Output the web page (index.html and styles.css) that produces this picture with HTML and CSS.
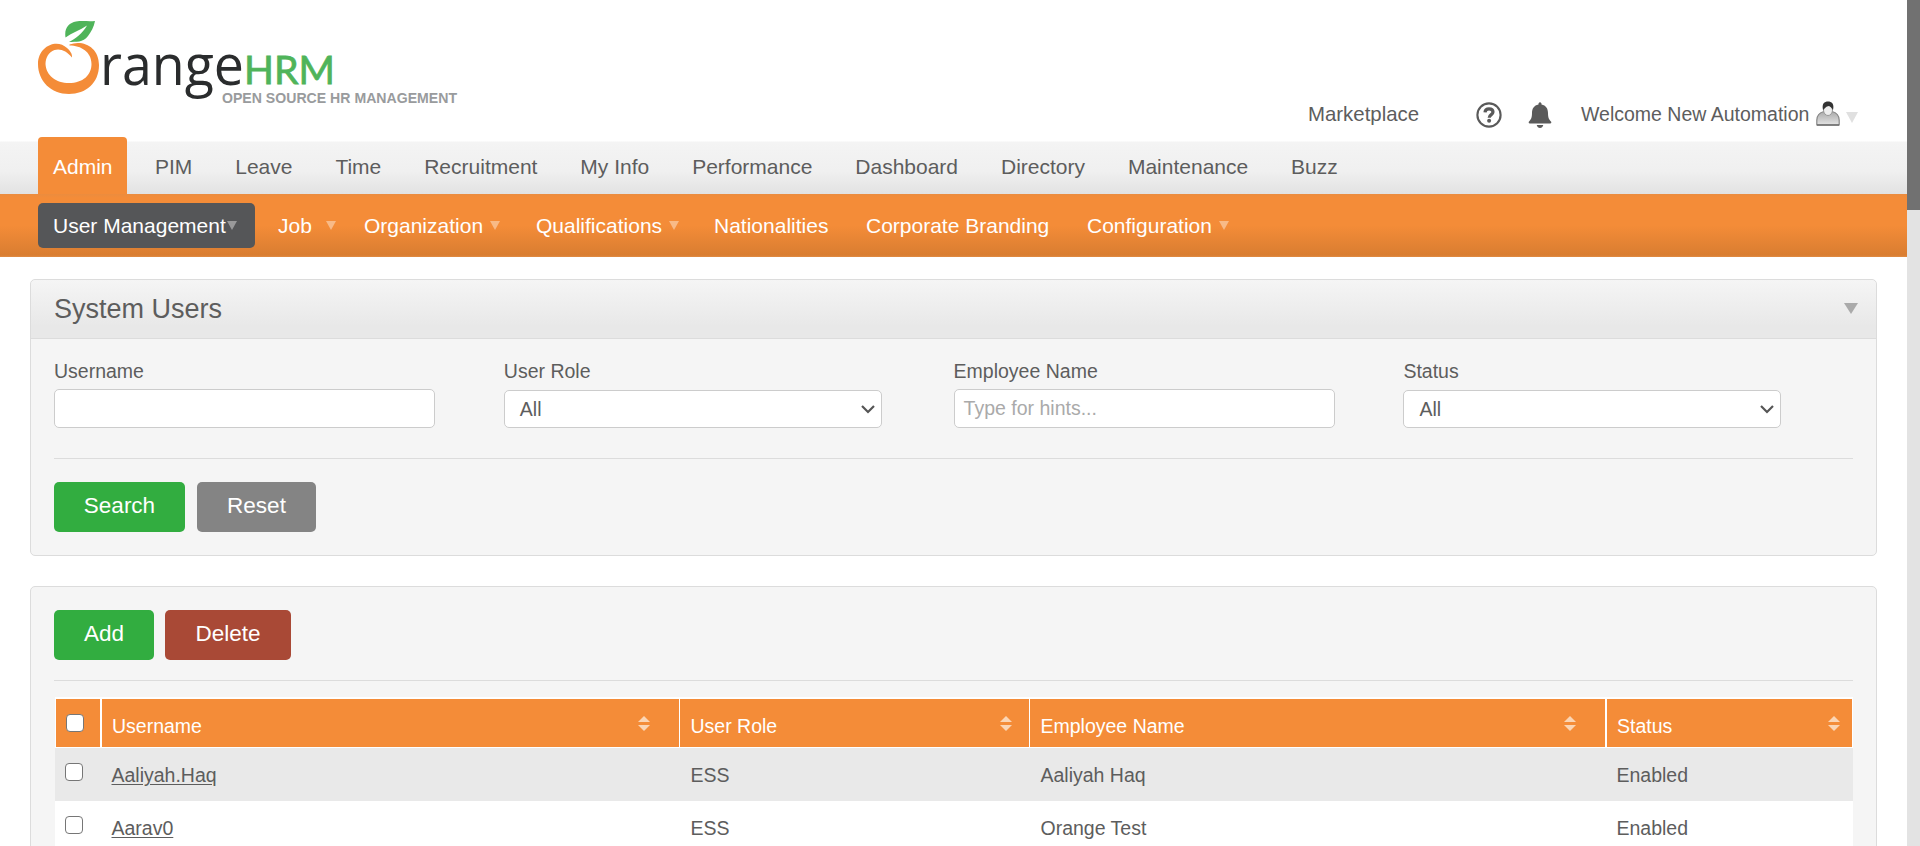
FILE: index.html
```html
<!DOCTYPE html>
<html lang="en">
<head>
<meta charset="utf-8">
<title>OrangeHRM</title>
<link rel="stylesheet" href="styles.css">
</head>
<body>
<div class="page">
  <header class="branding">
    <svg class="logo" width="440" height="100" viewBox="0 0 440 100">
      <path fill="#4fb45a" d="M27.500 16.500C26 7 31 2 38 .6C44 -.5 50 .6 57 0C56 6 53 11 50 15C45 22 38 20.500 31 21C37 18 45 12 49 4.500C42 9 34 12 27.500 16.500Z"/>
      <path fill="#f48c38" d="M31.500 23.500C45 18.500 61 26 61 44C61 62 48 73 31 73C13 73 0 60 0 43C0 25 19 17 29 27C32 29.500 34.500 33 34 36.500C29 30 22 27 16.500 29C10.500 31 7.500 37 7.500 43C8 54.500 18 62 31 62C45 62 53.500 54 53.500 43C53.500 31 43 24.500 31.500 24.500Z"/>
      <text class="logo-name" x="62" y="64" textLength="144" lengthAdjust="spacingAndGlyphs">range</text>
      <text class="logo-hrm" x="206" y="63" textLength="91" lengthAdjust="spacingAndGlyphs">HRM</text>
      <text class="logo-tag" x="184" y="82" textLength="235" lengthAdjust="spacingAndGlyphs">OPEN SOURCE HR MANAGEMENT</text>
    </svg>
    <nav class="account">
      <a class="market">Marketplace</a>
      <svg class="help" width="26" height="26" viewBox="0 0 26 26"><circle cx="13" cy="13" r="11.6" fill="none" stroke="#5a5a5a" stroke-width="2.1"/><path d="M9 10.3C9.2 7.9 10.8 6.8 13 6.8C15.4 6.8 17 8.1 17 10.1C17 12.7 13.2 12.6 13.2 15.8" fill="none" stroke="#5a5a5a" stroke-width="3.200"/><circle cx="13.1" cy="18.800" r="2" fill="#5a5a5a"/></svg>
      <svg class="bell" width="24" height="26" viewBox="0 0 24 26"><path fill="#5a5a5a" d="M10.5 2.4V1.5Q12 -.8 13.5 1.5V2.4C18 3.2 20 6.5 20 11C20 16.5 21.500 18 23 19.500Q24 21.500 22 21.600H2Q0 21.500 1 19.500C2.500 18 4 16.500 4 11C4 6.500 6 3.200 10.500 2.400ZM8.700 23H15.300Q14.500 26 12 26T8.700 23Z"/></svg>
      <a class="welcome">Welcome New Automation</a>
      <svg class="user" width="24" height="25" viewBox="0 0 24 25"><defs><linearGradient id="coat" x2="0" y2="1"><stop stop-color="#aaa"/><stop offset="1" stop-color="#e4e4e4"/></linearGradient></defs><path d="M.8 24V19C1 14 4 11.500 8 10.500H16C20 11.500 23 14 23.200 19V24Z" fill="url(#coat)" stroke="#888" stroke-width="1.200"/><path d="M1 24H23" stroke="#666" stroke-width="1.400"/><ellipse cx="12" cy="9" rx="4.500" ry="5.500" fill="#eee" stroke="#999"/><path d="M7 9C5.500 2.500 8.500 .5 12 .5S18.500 2.500 17 9C16 8 15.500 6 13 5C10 5 8.500 8 7 9Z" fill="#333"/></svg>
      <i class="arrow arrow-user"></i>
    </nav>
  </header>
  <nav class="menu">
    <a class="tab tab-active">Admin</a><a class="tab">PIM</a><a class="tab">Leave</a><a class="tab">Time</a><a class="tab">Recruitment</a><a class="tab">My Info</a><a class="tab">Performance</a><a class="tab">Dashboard</a><a class="tab">Directory</a><a class="tab">Maintenance</a><a class="tab">Buzz</a>
  </nav>
  <nav class="submenu">
    <a class="sub sub-active">User Management<i class="arrow"></i></a>
    <a class="sub sub-job">Job<i class="arrow"></i></a>
    <a class="sub sub-org">Organization<i class="arrow"></i></a>
    <a class="sub sub-qual">Qualifications<i class="arrow"></i></a>
    <a class="sub sub-nat">Nationalities</a>
    <a class="sub sub-brand">Corporate Branding</a>
    <a class="sub">Configuration<i class="arrow"></i></a>
  </nav>
  <main class="content">
    <section class="box search-box">
      <div class="box-head"><h1>System Users</h1><i class="arrow arrow-toggle"></i></div>
      <div class="fields">
        <div class="field"><label>Username</label><div class="input"></div></div>
        <div class="field"><label>User Role</label><div class="input select">All<svg width="14" height="9" viewBox="0 0 14 9"><path d="M1 1L7 7L13 1" fill="none" stroke="#555" stroke-width="2.200"/></svg></div></div>
        <div class="field"><label>Employee Name</label><div class="input hint">Type for hints...</div></div>
        <div class="field"><label>Status</label><div class="input select">All<svg width="14" height="9" viewBox="0 0 14 9"><path d="M1 1L7 7L13 1" fill="none" stroke="#555" stroke-width="2.200"/></svg></div></div>
      </div>
      <div class="actions"><a class="btn btn-search">Search</a><a class="btn btn-reset">Reset</a></div>
    </section>
    <section class="box list-box">
      <div class="top"><a class="btn btn-add">Add</a><a class="btn btn-delete">Delete</a></div>
      <div class="table">
        <div class="row head">
          <div class="cell"><span class="check"></span></div>
          <div class="cell">Username<span class="sort"><i class="up"></i><i class="down"></i></span></div>
          <div class="cell">User Role<span class="sort"><i class="up"></i><i class="down"></i></span></div>
          <div class="cell">Employee Name<span class="sort"><i class="up"></i><i class="down"></i></span></div>
          <div class="cell">Status<span class="sort"><i class="up"></i><i class="down"></i></span></div>
        </div>
        <div class="row odd"><div class="cell"><span class="check"></span></div><div class="cell"><a class="link">Aaliyah.Haq</a></div><div class="cell">ESS</div><div class="cell">Aaliyah Haq</div><div class="cell">Enabled</div></div>
        <div class="row"><div class="cell"><span class="check"></span></div><div class="cell"><a class="link">Aarav0</a></div><div class="cell">ESS</div><div class="cell">Orange Test</div><div class="cell">Enabled</div></div>
      </div>
    </section>
  </main>
</div>
<aside class="scrollbar"><div class="thumb"></div></aside>
</body>
</html>
```
FILE: styles.css
```css
* { box-sizing: border-box; }
body { margin: 0; height: 846px; overflow: hidden; display: flex; background: #fff; color: #5d5d5d; font: 19.5px "Liberation Sans", Arial, sans-serif; }
.page { width: 1907px; height: 846px; overflow: hidden; }
.scrollbar { width: 13px; background: #e3e3e3; }
.thumb { height: 210px; background: #717171; }

.branding { height: 137px; display: flex; justify-content: space-between; padding: 21px 49px 0 38px; }
.logo-name { font: 56px "Open Sans", sans-serif; fill: #2a2c2d; }
.logo-hrm { font: 39px Lato, sans-serif; fill: #4fb45a; stroke: #4fb45a; stroke-width: .8; }
.logo-tag { font: bold 15px "Liberation Sans", Arial, sans-serif; fill: #999b9d; }
.account { display: flex; align-items: flex-start; padding-top: 81px; line-height: 24px; white-space: nowrap; }
.market { font-size: 20.4px; width: 168px; }
.help { width: 26px; margin-right: 26px; }
.bell { margin-right: 29px; }
.welcome { width: 235px; }
.user { margin-top: -1px; }

.arrow { display: inline-block; border: 5.5px solid transparent; border-top: 9px solid rgba(255,255,255,.4); border-bottom: 0; }
.arrow-user { border-width: 11px 6px 0; border-top-color: #e0e0e0; margin: 10px 0 0 6px; }

.menu { height: 57px; display: flex; padding-left: 38px; background: linear-gradient(#fff 0 4px, #f4f4f4 5px, #f0f0f0 60%, #e2e2e2); }
.tab { height: 57px; padding: 0 15px; margin-right: 12.95px; font-size: 21px; line-height: 60px; white-space: nowrap; }
.tab-active { width: 89px; background: #f48c38; color: #fff; border-radius: 4px 4px 0 0; }

.submenu { height: 63px; display: flex; padding: 9px 0 0 38px; background: linear-gradient(#eb8c3e, #f48c38 4px, #f48c38 50%, #d97d31 97%, #e08c45); color: #fff; font-size: 21px; }
.sub { height: 45px; line-height: 46px; padding-left: 14px; margin-right: 0; white-space: nowrap; }
.sub .arrow { margin-left: 7px; vertical-align: 3px; }
.sub-active { width: 217px; background: #555658; border-radius: 5px; margin-right: 9px; padding-left: 15px; }
.sub-active .arrow { margin-left: 1px; }
.sub-job { width: 86px; }
.sub-job .arrow { margin-left: 14px; }
.sub-org { width: 172px; }
.sub-qual { width: 178px; }
.sub-nat { width: 152px; }
.sub-brand { width: 221px; }

.content { padding: 22px 30px 0; }
.box { background: #f5f5f5; border: 1px solid #dcdcdc; border-radius: 5px; }
.search-box { height: 277px; margin-bottom: 30px; }
.box-head { height: 59px; display: flex; justify-content: space-between; padding: 0 18px 0 23px; border-bottom: 1px solid #dcdcdc; background: linear-gradient(#f5f5f5, #e8e8e8 80%); border-radius: 5px 5px 0 0; }
h1 { margin: 0; font-size: 27px; font-weight: normal; line-height: 58px; }
.arrow-toggle { border-width: 11px 7px 0; border-top-color: #aaa; margin-top: 23px; }
.fields { height: 120px; margin: 0 23px; border-bottom: 1px solid #dcdcdc; display: grid; grid-template-columns: repeat(4, 449.8px); padding-top: 19px; }
.field { height: 70px; display: flex; flex-direction: column; justify-content: space-between; }
label { line-height: 26px; }
.input { width: 381px; height: 39px; border: 1px solid #ccc; border-radius: 5px; background: #fff; }
.select { width: 378px; height: 38px; display: flex; justify-content: space-between; align-items: center; padding: 0 6px 0 15px; }
.hint { color: #aaa; padding-left: 9px; line-height: 37px; }
.actions { display: flex; gap: 12px; padding: 23px; }
.btn { height: 50px; line-height: 48px; border-radius: 5px; text-align: center; color: #fff; font-size: 22.5px; }
.btn-search { width: 131px; background: #32ad40; }
.btn-reset { width: 119px; background: #848484; }
.btn-add { width: 100px; background: #32ad40; }
.btn-delete { width: 126px; background: #a94936; }

.list-box { height: 300px; padding: 23px 23px 0; }
.top { height: 71px; display: flex; gap: 11px; border-bottom: 1px solid #dcdcdc; }
.table { margin: 16px 0 0 1px; width: 1798px; background: #fff; padding-top: 2px; }
.row { height: 53px; display: grid; grid-template-rows: 100%; grid-template-columns: 46px 579px 350px 576px 247px; }
.cell { padding-left: 10.5px; line-height: 54px; }
.cell:first-child { padding-left: 10px; }
.odd { background: #e9e9e9; }
.head { height: 49px; grid-template-columns: 45px 579px 350px 576px 248px; color: #fff; border-bottom: 1px solid #fff; }
.head .cell { position: relative; background: #f48c38; border-left: 1px solid #fff; line-height: 54px; }
.head .cell:nth-child(2), .head .cell:last-child { border-left-width: 2px; padding-left: 10px; }
.head .cell:last-child { border-right: 1px solid #fff; }
.check { display: block; width: 18px; height: 18px; margin-top: 15px; border: 1.5px solid #767676; border-radius: 4px; background: #fff; }
.link { text-decoration: underline; text-underline-offset: 2px; }
.sort { position: absolute; right: 29px; top: 17px; display: grid; gap: 3px; }
.cell:nth-child(3) .sort { right: 17px; }
.cell:last-child .sort { right: 12px; }
.up, .down { border: 6px solid transparent; }
.up { border-top: 0; border-bottom-color: #fbd5b4; }
.down { border-bottom: 0; border-top-color: #fbd5b4; }
```
